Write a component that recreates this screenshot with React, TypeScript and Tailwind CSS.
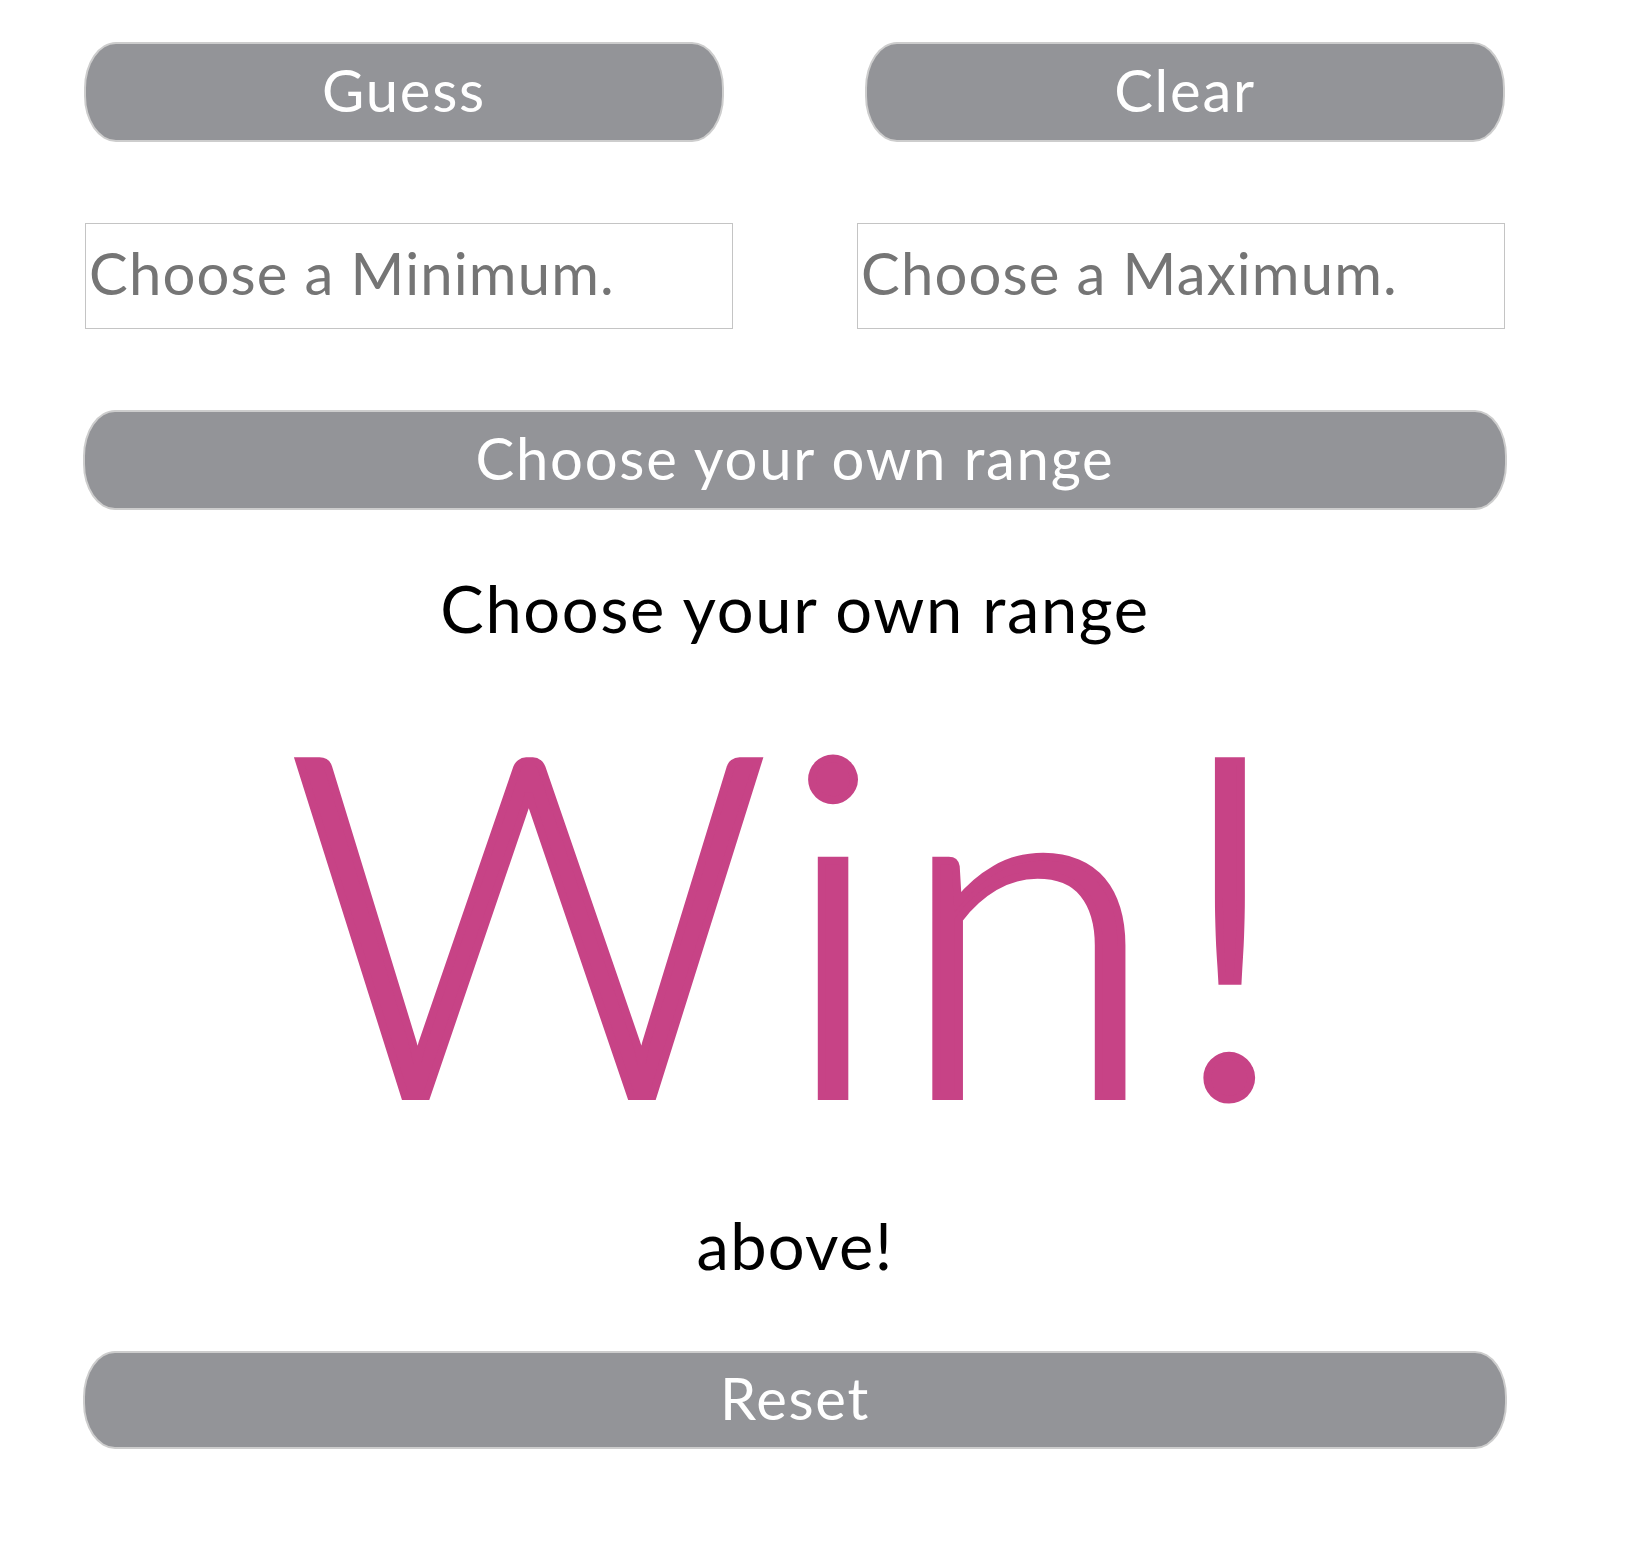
export default function App() {
  const btn =
    "flex items-center justify-center rounded-[32px/46px] border-2 border-[#cdcdcd] bg-[#939498] pb-1 text-[58px] leading-none tracking-[0.03em] text-white";
  const field =
    "h-[106px] w-[648px] border border-[#c4c4c4] pb-2 pl-[3px] text-[58px] tracking-[0.02em] text-black outline-none placeholder:text-[#757575]";

  return (
    <div className="min-h-[1554px] bg-white font-['Lato',sans-serif]">
      <div className="ml-[83px] w-[1424px] pt-[42px]">
        {/* top buttons */}
        <div className="flex justify-between">
          <button className={`${btn} ml-px h-[100px] w-[640px]`}>Guess</button>
          <button className={`${btn} mr-[2px] h-[100px] w-[640px]`}>Clear</button>
        </div>

        {/* range inputs */}
        <div className="mt-[81px] flex justify-between">
          <input placeholder="Choose a Minimum." className={`${field} ml-[2px]`} />
          <input placeholder="Choose a Maximum." className={`${field} mr-[2px]`} />
        </div>

        <button className={`${btn} mt-[81px] h-[100px] w-full`}>Choose your own range</button>

        {/* result */}
        <div className="mt-[66px] text-center text-[65px] leading-none tracking-[0.025em] text-black">
          Choose your own range
        </div>
        <div className="mt-[36px] text-center text-[473px] font-light leading-none tracking-[0.025em] text-[#c74386] [-webkit-text-stroke:8px_#c74386]">
          Win!
        </div>
        <div className="mt-[63px] text-center text-[65px] leading-none tracking-[0.02em] text-black">above!</div>

        <button className={`${btn} mt-[73px] h-[98px] w-full`}>Reset</button>
      </div>
    </div>
  );
}
